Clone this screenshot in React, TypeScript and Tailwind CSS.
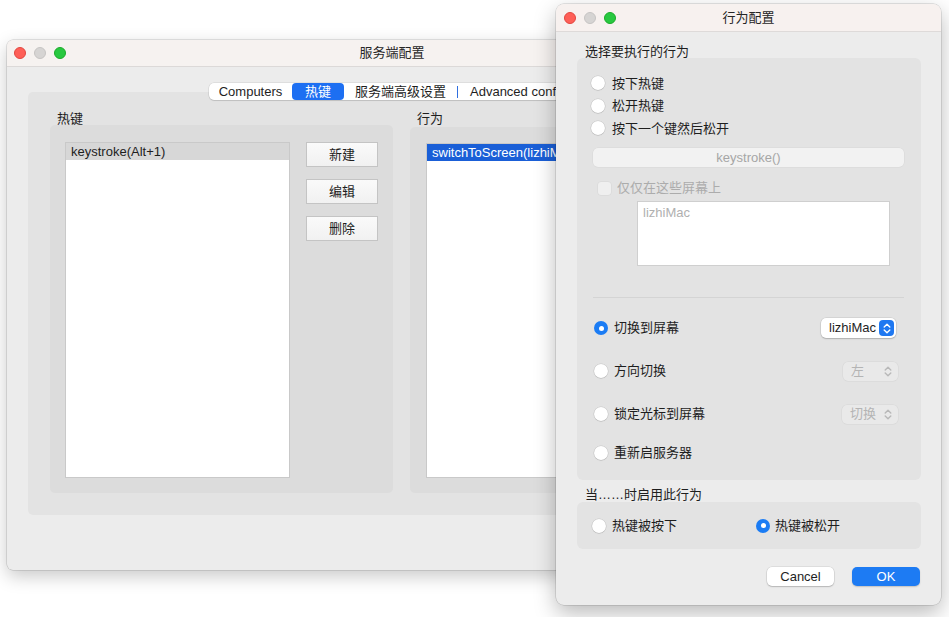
import React from 'react'

const font = { fontFamily: '"Liberation Sans", "Noto Sans CJK SC", sans-serif' }

function Lights() {
  return (
    <div className="flex items-center gap-[8px]">
      <span className="w-[12px] h-[12px] rounded-full bg-[#fe5f57] border border-[#e2463f]" />
      <span className="w-[12px] h-[12px] rounded-full bg-[#d6d4d3] border border-[#c6c4c3]" />
      <span className="w-[12px] h-[12px] rounded-full bg-[#28c840] border border-[#1aab29]" />
    </div>
  )
}

function Radio({ on = false }: { on?: boolean }) {
  if (on) {
    return (
      <span className="w-[14px] h-[14px] rounded-full bg-[#1b7cf4] flex items-center justify-center shrink-0">
        <span className="w-[5px] h-[5px] rounded-full bg-white" />
      </span>
    )
  }
  return <span className="w-[14px] h-[14px] rounded-full bg-white shadow-[0_0_0_0.5px_rgba(0,0,0,0.12),0_0.5px_1px_rgba(0,0,0,0.15)] shrink-0" />
}

function Updown({ color }: { color: string }) {
  return (
    <svg width="8" height="11" viewBox="0 0 8 11" fill="none" stroke={color} strokeWidth="1.4" strokeLinecap="round" strokeLinejoin="round">
      <path d="M1.2 4 L4 1.3 L6.8 4" />
      <path d="M1.2 7 L4 9.7 L6.8 7" />
    </svg>
  )
}

function DisabledPopup({ label, w }: { label: string; w: string }) {
  return (
    <div className={`${w} h-[19px] rounded-[5px] bg-[#e9e9e9] shadow-[0_0_0_0.5px_rgba(0,0,0,0.06)] flex items-center justify-between pl-[8px] pr-[6px] text-[#b4b4b4] text-[13px]`}>
      <span>{label}</span>
      <Updown color="#b8b8b8" />
    </div>
  )
}

function MainWindow() {
  return (
    <div className="absolute left-[7px] top-[40px] w-[770px] h-[530px] rounded-[6px] overflow-hidden bg-[#ececec] shadow-[0_0_0_0.5px_rgba(0,0,0,0.2),0_6px_18px_rgba(0,0,0,0.22)]">
      <div className="h-[27px] bg-[#f6f2f0] border-b border-[#dcd9d8] flex items-center px-[7px] relative">
        <Lights />
        <div className="absolute inset-0 flex items-center justify-center text-[13px] text-[#262626]">服务端配置</div>
      </div>
      <div className="ml-[21px] mt-[25px] w-[728px] h-[423px] rounded-[5px] bg-[#e3e3e3] relative pt-[20px] pl-[22px]">
        <div className="absolute left-[181px] -top-[9px] h-[17px] flex items-center bg-white rounded-[5px] shadow-[0_0_0_0.5px_rgba(0,0,0,0.12),0_1px_1px_rgba(0,0,0,0.1)] text-[13px] text-[#1e1e1e]">
          <div className="w-[83px] text-center">Computers</div>
          <div className="w-[52px] h-[17px] rounded-[4px] bg-[#1d6ff2] text-white flex items-center justify-center">热键</div>
          <div className="w-[113px] text-center">服务端高级设置</div>
          <div className="w-[1px] h-[12px] bg-[#2f6fe0]" />
          <div className="w-[160px] pl-[12px] whitespace-nowrap">Advanced configuration</div>
        </div>
        <div className="flex gap-[17px]">
          <div>
            <div className="text-[13px] leading-[13px] text-[#1e1e1e] ml-[7px]">热键</div>
            <div className="w-[343px] h-[368px] rounded-[5px] bg-[#dcdcdc] flex pl-[15px] pt-[17px]">
              <div className="w-[225px] h-[336px] bg-white border border-[#c9c9c9]">
                <div className="h-[17px] bg-[#d7d7d7] text-[13px] leading-[17px] pl-[5px] text-[#1e1e1e]">keystroke(Alt+1)</div>
              </div>
              <div className="ml-[16px] flex flex-col gap-[12px]">
                {['新建', '编辑', '删除'].map((b) => (
                  <div key={b} className="w-[72px] h-[25px] bg-gradient-to-b from-[#fafafa] to-[#f1f1f1] border border-[#c4c4c4] flex items-center justify-center text-[13px] text-[#1e1e1e]">{b}</div>
                ))}
              </div>
            </div>
          </div>
          <div>
            <div className="text-[13px] leading-[13px] text-[#1e1e1e] ml-[7px]">行为</div>
            <div className="mt-[2px] w-[310px] h-[366px] rounded-[5px] bg-[#dcdcdc] pl-[16px] pt-[16px]">
              <div className="w-[270px] h-[335px] bg-white border border-[#c9c9c9]">
                <div className="h-[17px] bg-[#1a5fd7] text-[13px] leading-[17px] pl-[5px] text-white">switchToScreen(lizhiMac)</div>
              </div>
            </div>
          </div>
        </div>
      </div>
    </div>
  )
}

function Dialog() {
  return (
    <div className="absolute left-[556px] top-[4px] w-[385px] h-[601px] rounded-[8px] overflow-hidden bg-[#ececec] shadow-[0_0_0_0.5px_rgba(0,0,0,0.2),0_8px_22px_rgba(0,0,0,0.28)] text-[13px] text-[#1e1e1e]">
      <div className="h-[28px] bg-[#f7f1ef] border-b border-[#dedad9] flex items-center px-[8px] relative">
        <Lights />
        <div className="absolute inset-0 flex items-center justify-center text-[13px] text-[#262626]">行为配置</div>
      </div>
      <div className="px-[21px]">
        <div className="pt-[13px] leading-[13px] ml-[8px]">选择要执行的行为</div>
        <div className="w-[344px] h-[422px] rounded-[6px] bg-[#e3e3e3] pt-[14px]">
          {['按下热键', '松开热键', '按下一个键然后松开'].map((t) => (
            <div key={t} className="h-[22.5px] flex items-center pl-[14px] gap-[7px]">
              <Radio />
              <span>{t}</span>
            </div>
          ))}
          <div className="mt-[8.5px] ml-[16px] w-[311px] h-[19px] rounded-[5px] bg-[#f2f2f2] shadow-[0_0_0_0.5px_rgba(0,0,0,0.05)] flex items-center justify-center text-[#a6a6a6]">keystroke()</div>
          <div className="mt-[14px] h-[14px] flex items-center pl-[21px]">
            <span className="w-[13px] h-[13px] rounded-[3px] bg-[#efefef] shadow-[0_0_0_0.5px_rgba(0,0,0,0.06)]" />
            <span className="ml-[6px] text-[#acacac]">仅仅在这些屏幕上</span>
          </div>
          <div className="mt-[6px] ml-[60px] w-[253px] h-[65px] bg-white border border-[#cfcfcf] px-[5px] pt-[1px] text-[#b0b0b0]">lizhiMac</div>
          <div className="mt-[31px] ml-[16px] w-[311px] h-[1px] bg-[#d4d4d4]" />
          <div className="mt-[20px] h-[20px] flex items-center pl-[17px] pr-[25px]">
            <Radio on />
            <span className="ml-[6px] flex-1">切换到屏幕</span>
            <div className="w-[75px] h-[20px] rounded-[5px] bg-white shadow-[0_0_0_0.5px_rgba(0,0,0,0.12),0_1px_1.5px_rgba(0,0,0,0.18)] flex items-center justify-between pl-[8px] pr-[2px]">
              <span>lizhiMac</span>
              <span className="w-[15px] h-[16px] rounded-[4px] bg-[#1f78f1] flex items-center justify-center">
                <Updown color="#ffffff" />
              </span>
            </div>
          </div>
          <div className="mt-[23px] h-[20px] flex items-center pl-[17px] pr-[23px]">
            <Radio />
            <span className="ml-[6px] flex-1">方向切换</span>
            <DisabledPopup label="左" w="w-[55px]" />
          </div>
          <div className="mt-[23px] h-[20px] flex items-center pl-[17px] pr-[23px]">
            <Radio />
            <span className="ml-[6px] flex-1">锁定光标到屏幕</span>
            <DisabledPopup label="切换" w="w-[56px]" />
          </div>
          <div className="mt-[19px] h-[20px] flex items-center pl-[17px]">
            <Radio />
            <span className="ml-[6px]">重新启服务器</span>
          </div>
        </div>
        <div className="mt-[8px] leading-[14px] ml-[8px]">当……时启用此行为</div>
        <div className="w-[344px] h-[47px] rounded-[6px] bg-[#e3e3e3] flex items-center pl-[15px]">
          <div className="w-[164px] flex items-center gap-[6px]">
            <Radio />
            <span>热键被按下</span>
          </div>
          <div className="flex items-center gap-[5px]">
            <Radio on />
            <span>热键被松开</span>
          </div>
        </div>
        <div className="mt-[18px] flex justify-end gap-[18px]">
          <div className="w-[67px] h-[19px] rounded-[5px] bg-white shadow-[0_0_0_0.5px_rgba(0,0,0,0.12),0_1px_1.5px_rgba(0,0,0,0.18)] flex items-center justify-center">Cancel</div>
          <div className="w-[68px] h-[19px] rounded-[5px] bg-[#1d7bf3] shadow-[0_1px_1.5px_rgba(0,0,0,0.18)] flex items-center justify-center text-white">OK</div>
        </div>
      </div>
    </div>
  )
}

export default function App() {
  return (
    <div className="relative w-[949px] h-[617px] bg-white overflow-hidden" style={font}>
      <MainWindow />
      <Dialog />
    </div>
  )
}
